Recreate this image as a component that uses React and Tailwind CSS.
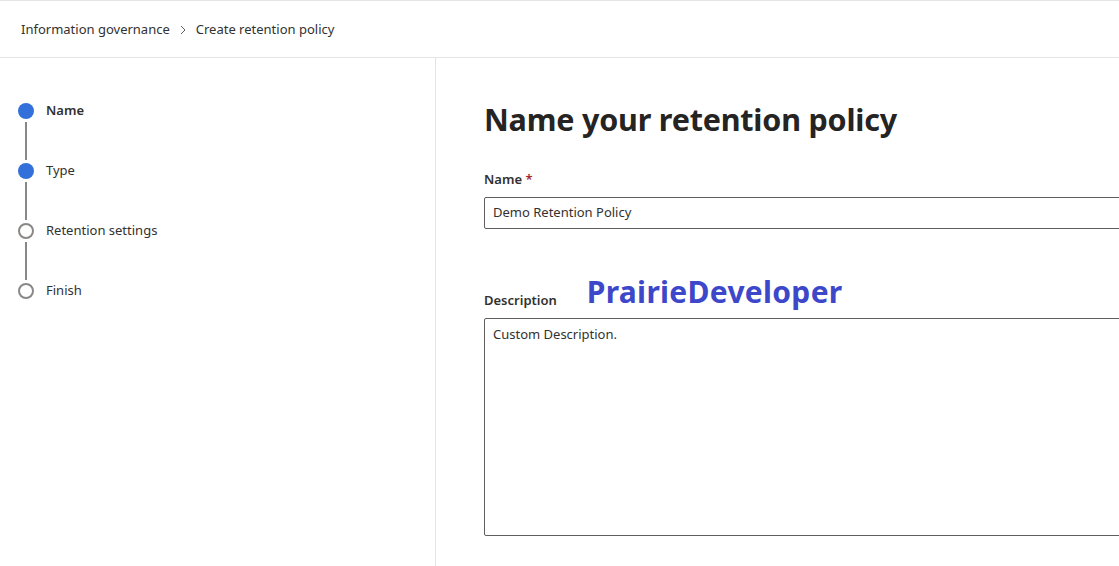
import React from 'react';

const steps = [
  { label: 'Name', done: true, current: true },
  { label: 'Type', done: true },
  { label: 'Retention settings', done: false },
  { label: 'Finish', done: false },
];

function Stepper() {
  return (
    <ol className="pt-[45px] pl-[18px]">
      {steps.map((step, i) => (
        <li key={step.label} className="flex flex-col">
          <div className="flex items-center h-[16px]">
            {step.done ? (
              <span className="w-[16px] h-[16px] rounded-full bg-[#3470d9] shrink-0" />
            ) : (
              <span className="w-[16px] h-[16px] rounded-full border-[2px] border-[#8a8886] shrink-0" />
            )}
            <span className={'ml-[12px] text-[13px] text-[#323130] ' + (step.current ? 'font-semibold' : '')}>
              {step.label}
            </span>
          </div>
          {i < steps.length - 1 && (
            <div className="w-[16px] h-[44px] flex justify-center py-[3px]">
              <span className="w-[2px] h-full bg-[#8a8886]" />
            </div>
          )}
        </li>
      ))}
    </ol>
  );
}

export default function App() {
  return (
    <div className="w-[1119px] h-[566px] bg-white overflow-hidden flex flex-col text-[#323130]" style={{ fontFamily: '"Noto Sans", "Open Sans", sans-serif' }}>
      <header className="h-[58px] border-t border-b border-[#e5e5e5] flex items-center pl-[21px] pt-[2px] text-[13px] shrink-0">
        <span>Information governance</span>
        <svg width="16" height="16" viewBox="0 0 16 16" className="mx-[5px]">
          <path d="M6 4l4 4-4 4" fill="none" stroke="#605e5c" strokeWidth="1" />
        </svg>
        <span>Create retention policy</span>
      </header>

      <div className="flex flex-1 min-h-0">
        <aside className="w-[436px] border-r border-[#e5e5e5] shrink-0">
          <Stepper />
        </aside>

        <main className="flex-1 pl-[48px] pt-[40px] min-w-0">
          <h1 className="text-[30.5px] font-bold text-[#252423] leading-[42px] tracking-[-0.2px]">Name your retention policy</h1>

          <label className="block mt-[30px] text-[13px] font-semibold leading-[18px]">
            Name <span className="text-[#a4262c]">*</span>
          </label>
          <div className="mt-[9px] h-[32px] w-[700px] border border-[#605e5c] rounded-[2px] flex items-center px-[8px] text-[13px]">
            Demo Retention Policy
          </div>

          <div className="mt-[43px] flex items-end h-[40px]">
            <span className="text-[13px] font-semibold leading-[18px] mb-[3px]">Description</span>
            <span className="ml-[30px] text-[30px] font-bold text-[#3d47c9] leading-[40px] tracking-[0.3px]">PrairieDeveloper</span>
          </div>
          <div className="mt-[6px] h-[218px] w-[700px] border border-[#605e5c] rounded-[2px] px-[8px] pt-[6px] text-[13px]">
            Custom Description.
          </div>
        </main>
      </div>
    </div>
  );
}
